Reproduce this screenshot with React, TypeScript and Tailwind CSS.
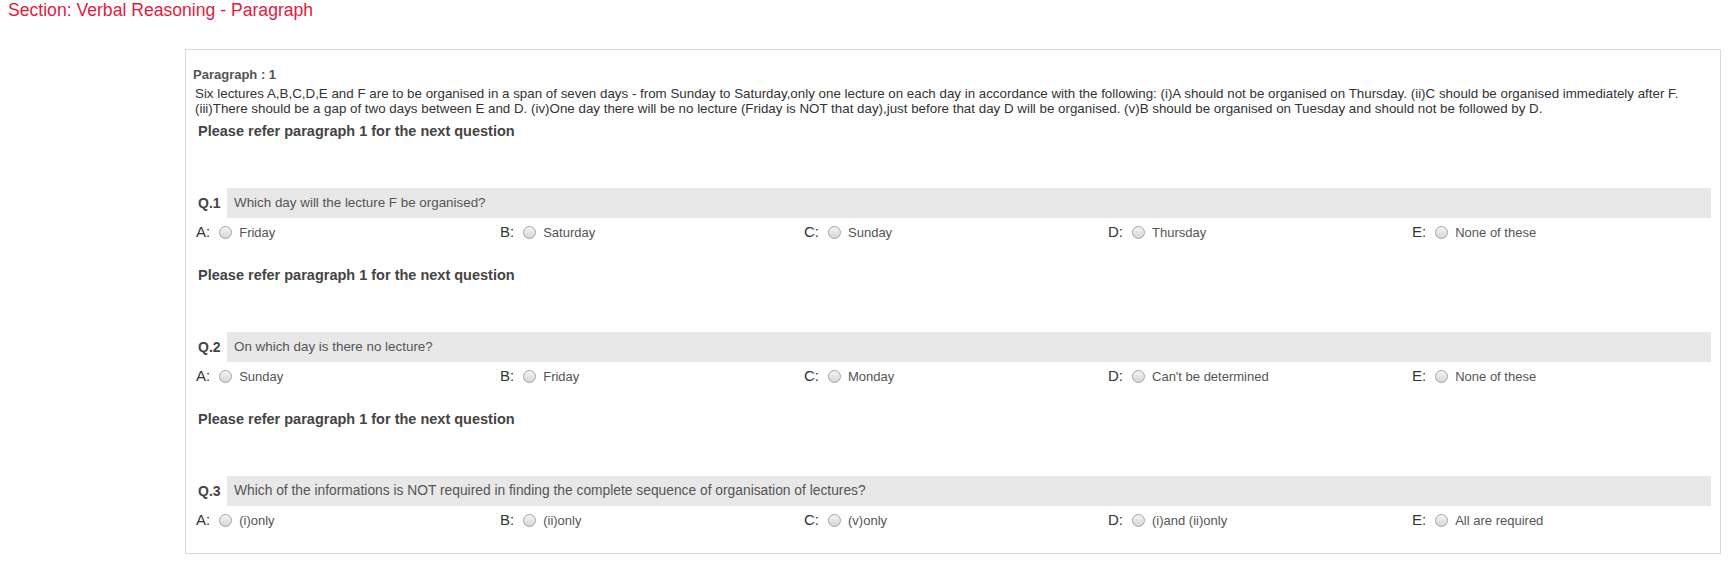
const questions = [
  {
    no: 'Q.1',
    text: 'Which day will the lecture F be organised?',
    size: 'text-[13.4px]',
    options: ['Friday', 'Saturday', 'Sunday', 'Thursday', 'None of these'],
  },
  {
    no: 'Q.2',
    text: 'On which day is there no lecture?',
    size: 'text-[13.4px]',
    options: ['Sunday', 'Friday', 'Monday', "Can't be determined", 'None of these'],
  },
  {
    no: 'Q.3',
    text: 'Which of the informations is NOT required in finding the complete sequence of organisation of lectures?',
    size: 'text-[13.8px]',
    options: ['(i)only', '(ii)only', '(v)only', '(i)and (ii)only', 'All are required'],
  },
]

const letters = ['A', 'B', 'C', 'D', 'E']

function Radio() {
  return (
    <span className="ml-[9px] inline-block h-[13px] w-[13px] shrink-0 rounded-full border border-[#a3a3a3] bg-linear-to-b from-[#f4f4f4] to-[#d6d6d6]" />
  )
}

export default function App() {
  return (
    <div className="min-h-screen bg-white font-['Liberation_Sans',Arial,sans-serif]">
      <h1 className="pl-[8px] text-[17.6px] leading-[20px] text-[#e5193f]">
        Section: Verbal Reasoning - Paragraph
      </h1>

      <div className="ml-[185px] mt-[29px] w-[1536px] border border-[#d9d9d9] pb-[24px] pl-[7px] pr-[9px] pt-[17px]">
        <div className="text-[13px] font-bold leading-[16px] text-[#555]">Paragraph : 1</div>
        <p className="mb-[5px] mt-[3px] pl-[2px] text-[13.35px] leading-[15px] text-[#333]">
          Six lectures A,B,C,D,E and F are to be organised in a span of seven days - from Sunday to
          Saturday,only one lecture on each day in accordance with the following: (i)A should not be
          organised on Thursday. (ii)C should be organised immediately after F.
          <br />
          (iii)There should be a gap of two days between E and D. (iv)One day there will be no lecture
          (Friday is NOT that day),just before that day D will be organised. (v)B should be organised on
          Tuesday and should not be followed by D.
        </p>

        <div className="flex flex-col gap-[24px] pl-[3px]">
          {questions.map((q) => (
            <div key={q.no}>
              <div className="pl-[2px] text-[14.5px] font-bold leading-[20px] text-[#444]">
                Please refer paragraph 1 for the next question
              </div>

              <div className="mt-[47px] flex h-[30px] items-center">
                <div className="w-[31px] pl-[2px] text-[14px] font-bold text-[#444]">{q.no}</div>
                <div className={`flex h-full flex-1 items-center bg-[#e8e8e8] pl-[7px] text-[#555] ${q.size}`}>
                  {q.text}
                </div>
              </div>

              <div className="mt-[3px] grid h-[20px] grid-cols-[repeat(5,304px)] items-center">
                {q.options.map((opt, i) => (
                  <div key={opt} className="flex items-center">
                    <span className="text-[15px] text-[#333]">{letters[i]}:</span>
                    <Radio />
                    <span className="ml-[7px] text-[13px] text-[#555]">{opt}</span>
                  </div>
                ))}
              </div>
            </div>
          ))}
        </div>
      </div>
    </div>
  )
}
